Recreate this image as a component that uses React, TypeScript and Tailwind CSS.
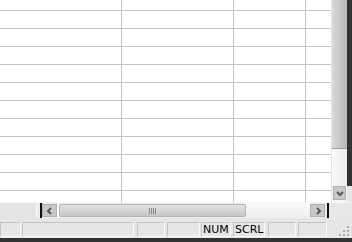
const rows = [11, 18, 18, 18, 18, 18, 18, 18, 18, 18, 18, 11];
const cols = ["w-[122px]", "w-[112px]", "w-[72px]", "flex-1"];

function Chevron({ dir }: { dir: "left" | "right" | "down" }) {
  const d =
    dir === "left"
      ? "M6 2 L3 5 L6 8"
      : dir === "right"
      ? "M4 2 L7 5 L4 8"
      : "M2 4 L5 7 L8 4";
  return (
    <svg width="10" height="10" viewBox="0 0 10 10">
      <path d={d} fill="none" stroke="#555" strokeWidth="2" />
    </svg>
  );
}

function Sheet() {
  return (
    <div className="flex flex-col w-[331px] bg-white">
      {rows.map((h, i) => (
        <div
          key={i}
          className={`flex ${i < rows.length - 1 ? "border-b border-[#c4c4c4]" : ""}`}
          style={{ height: h }}
        >
          {cols.map((c, j) => (
            <div
              key={j}
              className={`${c} ${j < 3 ? "border-r border-[#c4c4c4]" : ""}`}
            />
          ))}
        </div>
      ))}
    </div>
  );
}

function VScroll() {
  return (
    <div className="flex flex-col w-[16px] h-[202px] bg-[#f4f4f4] border-l border-[#e6e6e6]">
      <div className="h-[149px] bg-gradient-to-r from-[#dadada] via-[#c8c8c8] to-[#b8b8b8] border-b border-[#a0a0a0]" />
      <div className="flex-1 bg-gradient-to-r from-[#fafafa] to-[#ececec]" />
      <div className="h-[14px] mx-[1px] flex items-center justify-center bg-[#c8c8c8] border border-[#b0b0b0]">
        <Chevron dir="down" />
      </div>
      <div className="h-[2px]" />
    </div>
  );
}

function HScroll() {
  return (
    <div className="flex h-[16px] bg-[#ececec] border-t border-[#f8f8f8]">
      <div className="w-[37px] bg-[#e4e4e4] border-r border-[#fafafa]" />
      <div className="w-[3px]" />
      <div className="w-[2px] bg-[#111]" />
      <div className="w-[15px] my-[1px] flex items-center justify-center bg-[#c8c8c8] border border-[#b0b0b0]">
        <Chevron dir="left" />
      </div>
      <div className="w-[2px] bg-[#fafafa]" />
      <div className="w-[187px] my-[1px] flex items-center justify-center bg-gradient-to-b from-[#e4e4e4] to-[#c6c6c6] border border-[#b4b4b4] rounded-[2px]">
        <div className="flex gap-[1px]">
          <div className="w-[1px] h-[6px] bg-[#888]" />
          <div className="w-[1px] h-[6px] bg-[#888]" />
          <div className="w-[1px] h-[6px] bg-[#888]" />
          <div className="w-[1px] h-[6px] bg-[#888]" />
        </div>
      </div>
      <div className="w-[64px] bg-gradient-to-b from-[#fafafa] to-[#eeeeee]" />
      <div className="w-[15px] my-[1px] flex items-center justify-center bg-[#c8c8c8] border border-[#b0b0b0]">
        <Chevron dir="right" />
      </div>
      <div className="w-[2px]" />
      <div className="w-[2px] bg-[#111]" />
      <div className="flex-1 bg-[#e8e8e8]" />
    </div>
  );
}

function Panel({ w, text }: { w: string; text?: string }) {
  return (
    <div
      className={`${w} h-[15px] flex items-center px-[1px] border border-t-[#c4c4c4] border-l-[#c4c4c4] border-b-[#fafafa] border-r-[#fafafa] text-[11px] leading-none text-black`}
    >
      {text}
    </div>
  );
}

function StatusBar() {
  return (
    <div className="flex items-center h-[20px] pt-[3px] bg-[#e6e6e6] font-['DejaVu_Sans',sans-serif]">
      <Panel w="w-[21px]" />
      <div className="w-[1px]" />
      <Panel w="w-[112px]" />
      <div className="w-[3px]" />
      <Panel w="w-[28px]" />
      <div className="w-[2px]" />
      <Panel w="w-[33px]" />
      <div className="w-[1px]" />
      <Panel w="w-[30px]" text="NUM" />
      <div className="w-[2px]" />
      <Panel w="w-[32px]" text="SCRL" />
      <div className="w-[3px]" />
      <Panel w="w-[28px]" />
      <div className="w-[2px]" />
      <Panel w="w-[29px]" />
      <div className="flex-1 h-full flex items-end justify-end pr-[2px] pb-[1px]">
        <svg width="11" height="11" viewBox="0 0 11 11">
          {[
            [8, 0], [8, 4], [4, 4], [8, 8], [4, 8], [0, 8],
          ].map(([x, y], i) => (
            <rect key={i} x={x} y={y} width="2" height="2" fill="#a8a8a8" />
          ))}
        </svg>
      </div>
    </div>
  );
}

export default function App() {
  return (
    <div className="w-[352px] h-[242px] flex flex-col overflow-hidden bg-[#e6e6e6]">
      <div className="flex">
        <Sheet />
        <VScroll />
        <div className="w-[5px] h-[186px] bg-[#333]" />
      </div>
      <HScroll />
      <StatusBar />
      <div className="h-[4px] bg-[#333]" />
    </div>
  );
}
